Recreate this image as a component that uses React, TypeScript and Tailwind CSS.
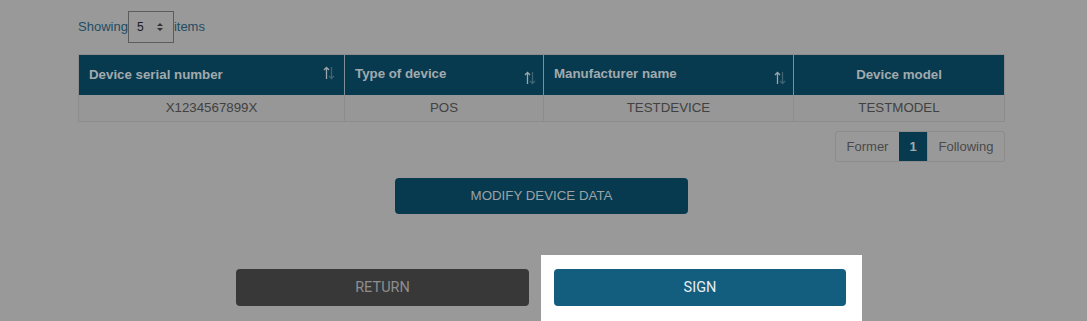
import React from "react";

const SortIcon = ({ className = "" }: { className?: string }) => (
  <svg width="12" height="14" viewBox="0 0 12 14" className={className} fill="none">
    <path d="M3.5 13V1.5M1 4l2.5-2.5L6 4" stroke="#9aa6ab" strokeWidth="1.3" />
    <path d="M8.5 1v11.5M6 10l2.5 2.5L11 10" stroke="#3f6272" strokeWidth="1.3" />
  </svg>
);

export default function App() {
  const font = { fontFamily: '"Liberation Sans", Arial, sans-serif' };
  return (
    <div className="w-[1087px] h-[321px] bg-[#999999] overflow-hidden" style={font}>
      <div className="ml-[78px] w-[927px] pt-[11px]">
        <div className="flex items-center text-[13px] text-[#1f4c62] h-[32px]">
          <span>Showing</span>
          <div className="w-[46px] h-[32px] border border-[#5c5c5c] flex items-center justify-between pl-[8px] pr-[10px] text-[#1a1a1a]">
            <span className="text-[12px]">5</span>
            <svg width="6" height="10" viewBox="0 0 6 10">
              <path d="M0 4L3 1l3 3z M0 6l3 3 3-3z" fill="#333" />
            </svg>
          </div>
          <span>items</span>
        </div>

        <div className="mt-[11px] border border-[#8c8c8c]">
          <div className="flex h-[40px] bg-[#083a4f] text-[13.3px] font-bold text-[#a2aaad]">
            <div className="w-[266px] flex items-center justify-between pl-[10px] pr-[9px] border-r border-[#7a8f98]">
              <span>Device serial number</span>
              <SortIcon className="-mt-[5px]" />
            </div>
            <div className="w-[199px] flex items-center justify-between pl-[10px] pr-[7px] border-r border-[#7a8f98]">
              <span className="-mt-[2px]">Type of device</span>
              <SortIcon className="mt-[5px]" />
            </div>
            <div className="w-[250px] flex items-center justify-between pl-[10px] pr-[7px] border-r border-[#7a8f98]">
              <span className="-mt-[2px]">Manufacturer name</span>
              <SortIcon className="mt-[5px]" />
            </div>
            <div className="flex-1 flex items-center justify-center">
              <span>Device model</span>
            </div>
          </div>
          <div className="flex h-[26px] bg-[#979797] text-[13.3px] text-[#414141]">
            <div className="w-[266px] flex items-center justify-center border-r border-[#8c8c8c]">X1234567899X</div>
            <div className="w-[199px] flex items-center justify-center border-r border-[#8c8c8c]">POS</div>
            <div className="w-[250px] flex items-center justify-center border-r border-[#8c8c8c]">TESTDEVICE</div>
            <div className="flex-1 flex items-center justify-center">TESTMODEL</div>
          </div>
        </div>

        <div className="mt-[9px] flex justify-end">
          <div className="flex h-[31px] border border-[#8c8c8c] rounded-[3px] text-[13px] text-[#4a4a4a] overflow-hidden">
            <div className="w-[63px] flex items-center justify-center">Former</div>
            <div className="w-[28px] flex items-center justify-center bg-[#083a4f] text-[#a2aaad] font-bold">1</div>
            <div className="w-[77px] flex items-center justify-center border-l border-[#8c8c8c]">Following</div>
          </div>
        </div>

        <div className="mt-[16px] flex justify-center">
          <div className="w-[293px] h-[36px] rounded-[4px] bg-[#083a4f] flex items-center justify-center text-[13.3px] text-[#9aa4a8]">
            MODIFY DEVICE DATA
          </div>
        </div>

        <div className="mt-[41px] ml-[158px] flex gap-[12px]" style={{ fontFamily: 'Roboto, "Liberation Sans", sans-serif' }}>
          <div className="pt-[14px]">
            <div className="w-[293px] h-[37px] rounded-[4px] bg-[#383838] flex items-center justify-center text-[14.5px] text-[#8e8e8e]">
              RETURN
            </div>
          </div>
          <div className="bg-white pt-[14px] pl-[13px] pr-[16px] pb-[20px]">
            <div className="w-[292px] h-[37px] rounded-[4px] bg-[#135d7e] flex items-center justify-center text-[14.5px] text-[#e6eef2]">
              SIGN
            </div>
          </div>
        </div>
      </div>
    </div>
  );
}
